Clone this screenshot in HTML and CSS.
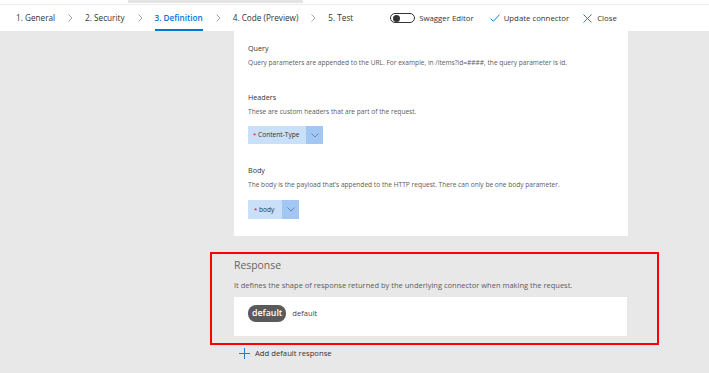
FILE: index.html
```html
<!DOCTYPE html>
<html>
<head>
<meta charset="utf-8">
<link rel="stylesheet" href="styles.css">
</head>
<body>
<div class="topstrip"><div class="thumb"></div></div>
<header class="nav">
  <div class="tabs">
    <span class="tab">1. General</span>
    <svg class="chev" width="5" height="8" viewBox="0 0 5 8"><path d="M0.5 0.5 L4 4 L0.5 7.5" fill="none" stroke="#9a9a9a" stroke-width="0.9"/></svg>
    <span class="tab">2. Security</span>
    <svg class="chev" width="5" height="8" viewBox="0 0 5 8"><path d="M0.5 0.5 L4 4 L0.5 7.5" fill="none" stroke="#9a9a9a" stroke-width="0.9"/></svg>
    <span class="tab active">3. Definition</span>
    <svg class="chev" width="5" height="8" viewBox="0 0 5 8"><path d="M0.5 0.5 L4 4 L0.5 7.5" fill="none" stroke="#9a9a9a" stroke-width="0.9"/></svg>
    <span class="tab">4. Code (Preview)</span>
    <svg class="chev" width="5" height="8" viewBox="0 0 5 8"><path d="M0.5 0.5 L4 4 L0.5 7.5" fill="none" stroke="#9a9a9a" stroke-width="0.9"/></svg>
    <span class="tab">5. Test</span>
  </div>
  <div class="actions">
    <span class="toggle"><span class="knob"></span></span>
    <span class="act act-swagger">Swagger Editor</span>
    <svg class="ico" width="10" height="8" viewBox="0 0 10 8"><path d="M0.5 4.5 L3.3 7.3 L9.5 0.7" fill="none" stroke="#1a7fd6" stroke-width="1"/></svg>
    <span class="act act-update">Update connector</span>
    <svg class="ico ico-x" width="9" height="9" viewBox="0 0 9 9"><path d="M0.5 0.5 L8.5 8.5 M8.5 0.5 L0.5 8.5" fill="none" stroke="#1a7fd6" stroke-width="1"/></svg>
    <span class="act">Close</span>
  </div>
</header>
<main class="content">
  <section class="card">
    <div class="label">Query</div>
    <div class="desc">Query parameters are appended to the URL. For example, in /items?id=####, the query parameter is id.</div>
    <div class="label l2">Headers</div>
    <div class="desc">These are custom headers that are part of the request.</div>
    <div class="pill"><span class="pill-text"><span class="req">*</span> Content-Type</span><span class="pill-dd"><svg width="8" height="5" viewBox="0 0 8 5"><path d="M0.5 0.5 L4 4 L7.5 0.5" fill="none" stroke="#5a7fae" stroke-width="0.9"/></svg></span></div>
    <div class="label l3">Body</div>
    <div class="desc">The body is the payload that’s appended to the HTTP request. There can only be one body parameter.</div>
    <div class="pill p2"><span class="pill-text"><span class="req">*</span> body</span><span class="pill-dd"><svg width="8" height="5" viewBox="0 0 8 5"><path d="M0.5 0.5 L4 4 L7.5 0.5" fill="none" stroke="#5a7fae" stroke-width="0.9"/></svg></span></div>
  </section>
  <section class="response">
    <div class="resp-title">Response</div>
    <div class="resp-desc">It defines the shape of response returned by the underlying connector when making the request.</div>
    <div class="resp-box">
      <span class="badge">default</span>
      <span class="resp-name">default</span>
    </div>
  </section>
  <div class="add">
    <svg width="11" height="11" viewBox="0 0 11 11"><path d="M5.5 0 V11 M0 5.5 H11" stroke="#1a7fd6" stroke-width="1"/></svg>
    <span>Add default response</span>
  </div>
</main>
</body>
</html>
```
FILE: styles.css
```css
html, body {
  margin: 0;
  padding: 0;
}
body {
  background: #e8e8e8;
  font-family: "Segoe UI", "Open Sans", "Liberation Sans", sans-serif;
  color: #333;
  width: 709px;
  height: 373px;
  overflow: hidden;
}
.topstrip {
  height: 4px;
  background: #fff;
  border-bottom: 1px solid #ececec;
}
.thumb {
  margin-left: 128px;
  width: 175px;
  height: 3px;
  background: #e4e4e4;
}
.nav {
  height: 26px;
  background: #fff;
  display: flex;
  align-items: stretch;
}
.tabs {
  display: flex;
  align-items: center;
  padding-left: 16px;
  font-size: 8.2px;
}
.tab {
  height: 26px;
  line-height: 25px;
  box-sizing: border-box;
  color: #333;
}
.tab.active {
  color: #0078d4;
  font-weight: 600;
  border-bottom: 2px solid #0078d4;
}
.chev {
  margin: 0 12px 0 13px;
}
.actions {
  display: flex;
  align-items: center;
  padding-left: 37px;
  font-size: 7.8px;
}
.toggle {
  width: 21px;
  height: 8px;
  border: 1px solid #333;
  border-radius: 6px;
  display: flex;
  align-items: center;
  padding-left: 2px;
  box-sizing: content-box;
}
.knob {
  width: 7px;
  height: 7px;
  border-radius: 50%;
  background: #333;
}
.act {
  color: #333;
}
.act-swagger {
  margin-left: 4px;
  margin-right: 16px;
}
.ico {
  margin-right: 4px;
}
.act-update {
  margin-right: 14px;
}
.ico-x {
  margin-right: 5px;
}
.content {
  padding-left: 210px;
}
.card {
  margin-left: 24px;
  width: 394px;
  height: 205px;
  box-sizing: border-box;
  background: #fff;
  padding: 11px 14px 0 14px;
}
.label {
  font-size: 7.2px;
  line-height: 12px;
  color: #333;
}
.l2 {
  margin-top: 22px;
}
.l3 {
  margin-top: 20px;
}
.desc {
  font-size: 6.6px;
  line-height: 12px;
  color: #5c5c5c;
  margin-top: 3px;
}
.pill {
  margin-top: 8px;
  display: inline-flex;
  height: 18px;
  font-size: 6.6px;
  color: #333;
}
.pill.p2 {
  margin-top: 9px;
  height: 19px;
}
.pill-text {
  background: #c9e0f8;
  padding: 0 7px 0 5px;
  line-height: 18px;
}
.pill.p2 .pill-text {
  line-height: 19px;
  width: 22px;
  padding: 0 6px 0 6px;
}
.req {
  color: #d00;
  font-size: 6px;
}
.pill-dd {
  background: #a2c7f5;
  width: 17px;
  display: flex;
  align-items: center;
  justify-content: center;
}
.response {
  margin-top: 16px;
  width: 449px;
  height: 93px;
  box-sizing: border-box;
  border: 2px solid #f00;
  padding: 3px 30px 0 22px;
}
.resp-title {
  font-size: 10.4px;
  line-height: 16px;
  color: #666;
}
.resp-desc {
  margin-top: 6px;
  font-size: 7.5px;
  line-height: 12px;
  color: #5c5c5c;
}
.resp-box {
  margin-top: 6px;
  width: 393px;
  height: 39px;
  box-sizing: border-box;
  background: #fff;
  padding: 8px 14px 0 14px;
  display: flex;
  align-items: flex-start;
}
.badge {
  background: #5a5a5a;
  color: #fff;
  font-size: 8.8px;
  font-weight: 600;
  height: 17px;
  line-height: 17px;
  padding: 0 4px;
  border-radius: 8px;
}
.resp-name {
  margin-left: 6px;
  font-size: 7.6px;
  line-height: 16px;
  color: #444;
}
.add {
  margin-top: 2px;
  margin-left: 29px;
  display: flex;
  align-items: center;
  font-size: 7.7px;
  line-height: 12px;
  color: #333;
}
.add svg {
  margin-right: 5px;
}
```
